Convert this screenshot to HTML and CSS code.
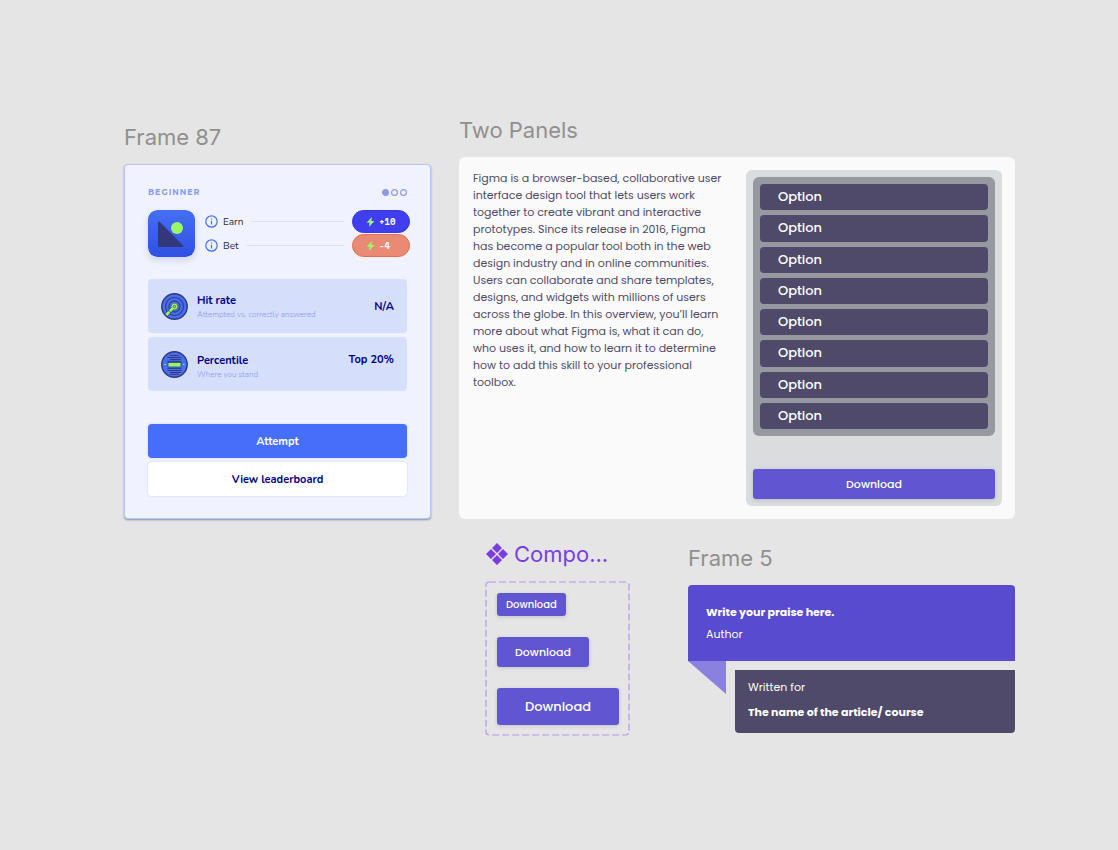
FILE: index.html
```
<!DOCTYPE html>
<html lang="en">
<head>
    <meta charset="UTF-8">
    <title>Components</title>
    <link rel="stylesheet" href="styles.css">
</head>

<body>
    <main class="canvas">

        <section class="frame">
            <h2 class="frame-title">Frame 87</h2>
            <div class="quiz-card">
                <div class="quiz-level">
                    <span>BEGINNER</span>
                    <svg class="dots" viewBox="0 0 25 7"><circle class="dot-on" cx="3.500" cy="3.500" r="2.900"/><circle cx="12.500" cy="3.500" r="2.900"/><circle cx="21.500" cy="3.500" r="2.900"/></svg>
                </div>

                <div class="quiz-stakes">
                    <svg class="quiz-logo" viewBox="0 0 47 47">
                        <defs>
                            <linearGradient id="logo-bg" x1="0" y1="0" x2="0" y2="1">
                                <stop offset="0" stop-color="#456ff5"/>
                                <stop offset="1" stop-color="#2f50e2"/>
                            </linearGradient>
                        </defs>
                        <rect width="47" height="47" rx="9" fill="url(#logo-bg)"/>
                        <path d="M10 13.200v22q0 1.800 1.800 1.800h22.600q1.800 0 .6-1.400L11.600 11.800q-1.600-1.200-1.600 1.400z" fill="#35377d"/>
                        <circle cx="29" cy="18" r="6" fill="#98f868"/>
                    </svg>
                    <div class="stakes">
                        <div class="stake">
                            <svg class="info" viewBox="0 0 13 13"><circle cx="6.500" cy="6.500" r="5.700"/><path d="M6.500 5.800v3.600M6.500 3.400v1.100"/></svg>
                            <span>Earn</span>
                            <span class="stake-line"></span>
                            <span class="pill pill-earn"><svg class="bolt" viewBox="0 0 9 10"><path d="M5.800 0 0.500 5.800h3L3 10l5.500-5.900h-3z"/></svg>+10</span>
                        </div>
                        <div class="stake">
                            <svg class="info" viewBox="0 0 13 13"><circle cx="6.500" cy="6.500" r="5.700"/><path d="M6.500 5.800v3.600M6.500 3.400v1.100"/></svg>
                            <span>Bet</span>
                            <span class="stake-line"></span>
                            <span class="pill pill-bet"><svg class="bolt" viewBox="0 0 9 10"><path d="M5.800 0 0.500 5.800h3L3 10l5.500-5.900h-3z"/></svg>-4</span>
                        </div>
                    </div>
                </div>

                <div class="stats">
                    <div class="stat">
                        <svg class="stat-icon" viewBox="0 0 27 27">
                            <g fill="#456ff5" stroke="#343a7c">
                                <circle cx="13.500" cy="13.500" r="12.700" stroke-width="1.500"/>
                                <circle cx="13.500" cy="13.500" r="9" stroke-width="1.100"/>
                                <circle cx="13.500" cy="13.500" r="5.600" stroke-width="1.100"/>
                            </g>
                            <circle cx="13.500" cy="13.500" r="3.400" fill="#98f868" stroke="#343a7c" stroke-width=".6"/>
                            <path d="M11.800 15.300 4.800 22.300" stroke="#343a7c" stroke-width="4"/>
                            <path d="M12 15.100 5 22.100" stroke="#98f868" stroke-width="2.800" stroke-dasharray="4.500 .6"/>
                            <circle cx="13.500" cy="13.500" r="1.200" fill="#98f868" stroke="#343a7c" stroke-width=".7"/>
                        </svg>
                        <div class="stat-text">
                            <strong>Hit rate</strong>
                            <small>Attempted vs. correctly answered</small>
                        </div>
                        <span class="stat-value">N/A</span>
                    </div>
                    <div class="stat stat-top">
                        <svg class="stat-icon" viewBox="0 0 27 27">
                            <circle cx="13.500" cy="13.500" r="12.700" fill="#456ff5" stroke="#343a7c" stroke-width="1.500"/>
                            <path d="M9 4.500h9M6.500 6.500h14M9 8.500h11M6.500 10.300h14M6.500 17.500h14M6.500 19.500h14M9 21.500h11M9 23.200h9" stroke="#343a7c"/>
                            <rect x="7" y="11.500" width="13" height="4.500" fill="#98f868" stroke="#343a7c" stroke-width=".8"/>
                            <path d="M3.500 13.500h1.500M22 13.500h1.500" stroke="#98f868"/>
                        </svg>
                        <div class="stat-text">
                            <strong>Percentile</strong>
                            <small>Where you stand</small>
                        </div>
                        <span class="stat-value">Top 20%</span>
                    </div>
                </div>

                <div class="quiz-actions">
                    <button class="quiz-btn quiz-btn-main" type="button">Attempt</button>
                    <button class="quiz-btn" type="button">View leaderboard</button>
                </div>
            </div>
        </section>

        <section class="frame">
            <h2 class="frame-title">Two Panels</h2>
            <div class="panels">
                <p class="panel-text">Figma is a browser-based, collaborative user interface design tool that lets users work together to create vibrant and interactive prototypes. Since its release in 2016, Figma has become a popular tool both in the web design industry and in online communities. Users can collaborate and share templates, designs, and widgets with millions of users across the globe. In this overview, you’ll learn more about what Figma is, what it can do, who uses it, and how to learn it to determine how to add this skill to your professional toolbox.</p>
                <div class="panel-side">
                    <div class="options">
                        <button class="option" type="button">Option</button>
                        <button class="option" type="button">Option</button>
                        <button class="option" type="button">Option</button>
                        <button class="option" type="button">Option</button>
                        <button class="option" type="button">Option</button>
                        <button class="option" type="button">Option</button>
                        <button class="option" type="button">Option</button>
                        <button class="option" type="button">Option</button>
                    </div>
                    <button class="btn btn-medium" type="button">Download</button>
                </div>
            </div>
        </section>

        <div class="lower">
            <section class="frame component">
                <h2 class="frame-title component-title">
                    <svg class="component-icon" viewBox="0 0 22 22"><path d="M11 0l5 5-5 5-5-5zM5 6l5 5-5 5-5-5zM17 6l5 5-5 5-5-5zM11 12l5 5-5 5-5-5z"/></svg>
                    <span>Compo...</span>
                </h2>
                <div class="variants">
                    <svg class="variants-outline"><rect x="1" y="1" rx="3"/></svg>
                    <button class="btn btn-small" type="button">Download</button>
                    <button class="btn btn-medium" type="button">Download</button>
                    <button class="btn btn-large" type="button">Download</button>
                </div>
            </section>

            <section class="frame praise">
                <h2 class="frame-title">Frame 5</h2>
                <div class="praise-quote">
                    <strong>Write your praise here.</strong>
                    <span>Author</span>
                </div>
                <div class="praise-lower">
                    <svg class="praise-tail" viewBox="0 0 38 33"><path d="M0 0h38v33z"/></svg>
                    <div class="praise-source">
                        <span>Written for</span>
                        <strong>The name of the article/ course</strong>
                    </div>
                </div>
            </section>
        </div>

    </main>
</body>
</html>
```
FILE: styles.css
```
* {
    box-sizing: border-box;
}
body {
    margin: 0;
    background-color: #e5e5e5;
    font-family: 'Poppins', 'Inter', sans-serif;
    font-size: 11px;
}
button {
    border: 0;
    padding: 0;
    font-family: inherit;
    cursor: pointer;
}
svg {
    display: block;
    flex: none;
}

/* canvas */
.canvas {
    display: grid;
    grid-template-columns: 307fr 556fr;
    align-items: end;
    column-gap: 28px;
    row-gap: 21px;
    padding: 116px 103px 60px 124px;
}
.frame-title {
    margin: 0 0 13px;
    color: #909090;
    font: 400 22px/28px 'Inter', sans-serif;
}

/* quiz card */
.quiz-card {
    padding: 20px 23px 22px;
    border: 1px solid #b3c8f8;
    border-radius: 4px;
    background-color: #f0f3ff;
    box-shadow: 0 1px 2px rgba(40, 60, 120, .5);
    font-family: 'Nunito', 'Open Sans', sans-serif;
}
.quiz-level {
    display: flex;
    align-items: center;
    justify-content: space-between;
    margin-bottom: 11px;
    color: #8a9bee;
    font: 700 8px/14px 'Montserrat', 'Inter', sans-serif;
    letter-spacing: 1px;
}
.dots {
    width: 25px;
    height: 7px;
    fill: none;
    stroke: #8a9bee;
    stroke-width: 1.2;
}
.dot-on {
    fill: #8a9bee;
}
.quiz-stakes {
    display: flex;
    gap: 10px;
    margin-right: -3px;
}
.quiz-logo {
    width: 47px;
    height: 47px;
    border-radius: 9px;
    box-shadow: 0 3px 7px rgba(60, 80, 160, .2);
}
.stakes {
    flex: 1;
    display: grid;
    gap: 1px;
}
.stake {
    display: flex;
    align-items: center;
    color: #1f2a4d;
    font-size: 10px;
}
.info {
    width: 13px;
    height: 13px;
    margin-right: 5px;
    fill: none;
    stroke: #456ff5;
    stroke-width: 1.2;
}
.stake-line {
    flex: 1;
    height: 1px;
    margin: 0 8px;
    background-color: #d3dffc;
}
.pill {
    display: flex;
    align-items: center;
    width: 58px;
    height: 23px;
    padding-left: 13px;
    border: 1px solid #3a37d8;
    border-radius: 12px;
    background-color: #403eee;
    color: #fff;
    font: 700 9px/12px 'Space Mono', 'Liberation Mono', monospace;
}
.pill-bet {
    border-color: #e0704f;
    background-color: #e98a75;
}
.bolt {
    width: 9px;
    height: 10px;
    margin-right: 4px;
    fill: #98f868;
}
.stats {
    display: grid;
    gap: 4px;
    margin: 22px 0 33px;
}
.stat {
    display: flex;
    align-items: center;
    height: 54px;
    padding: 0 13px;
    border-radius: 4px;
    background-color: #d5defb;
    color: #00008b;
}
.stat-icon {
    width: 27px;
    height: 27px;
    margin-right: 9px;
}
.stat-text {
    display: grid;
    flex: 1;
    padding-top: 2px;
}
.stat strong, .stat-value {
    font-size: 11px;
    font-weight: 700;
    line-height: 16px;
}
.stat small {
    color: #8a9bee;
    font-size: 8px;
    font-weight: 300;
    line-height: 12px;
}
.stat-value {
    padding-top: 2px;
}
.stat-top .stat-text {
    padding-top: 6px;
}
.stat-top .stat-value {
    align-self: flex-start;
    padding-top: 15px;
}
.quiz-actions {
    display: grid;
    gap: 4px;
}
.quiz-btn {
    height: 34px;
    border-radius: 4px;
    background-color: #fff;
    box-shadow: 0 0 2px rgba(60, 80, 160, .25);
    color: #00008b;
    font-size: 11px;
    font-weight: 700;
}
.quiz-btn-main {
    background-color: #456ff8;
    color: #fff;
}

/* two panels */
.panels {
    display: grid;
    grid-template-columns: 253fr 256fr;
    gap: 20px;
    padding: 13px 13px 13px 14px;
    border-radius: 6px;
    background-color: #fafafa;
}
.panel-text {
    margin: 0;
    color: #4f4a69;
    line-height: 17px;
}
.panel-side {
    display: flex;
    flex-direction: column;
    gap: 33px;
    padding: 7px;
    border-radius: 6px;
    background-color: #dbdcde;
}
.options {
    display: grid;
    gap: 5px;
    min-height: 259px;
    padding: 7px;
    border-radius: 6px;
    background-color: #9699a0;
}
.option {
    padding-left: 18px;
    border-radius: 4px;
    background-color: #4f4a69;
    color: #fff;
    font-size: 13px;
    font-weight: 500;
    text-align: left;
}

/* download button */
.btn {
    border-radius: 3px;
    background-color: #6056d2;
    box-shadow: 0 1px 4px rgba(0, 0, 0, .15);
    color: #fff;
    font-weight: 500;
}
.btn-small {
    height: 23px;
    padding: 0 9px;
    font-size: 10px;
}
.btn-medium {
    height: 30px;
    padding: 0 18px;
    font-size: 11px;
}
.btn-large {
    height: 37px;
    padding: 0 28px;
    font-size: 13px;
}

/* component and praise */
.lower {
    grid-column: 2;
    display: flex;
    align-items: center;
    justify-content: space-between;
    gap: 58px;
    padding-left: 26px;
}
.component {
    flex: none;
    width: 145px;
}
.component-title {
    display: flex;
    align-items: center;
    gap: 6px;
    padding-left: 1px;
    color: #7b3fe0;
}
.component-icon {
    width: 22px;
    height: 22px;
    fill: #7b3fe0;
}
.variants {
    position: relative;
    display: flex;
    flex-direction: column;
    align-items: flex-start;
    gap: 21px;
    padding: 12px 12px 11px;
}
.variants-outline {
    position: absolute;
    top: 0;
    left: 0;
    width: 100%;
    height: 100%;
    pointer-events: none;
}
.variants-outline rect {
    width: calc(100% - 2px);
    height: calc(100% - 2px);
    fill: none;
    stroke: #b596ea;
    stroke-width: 1.2;
    stroke-dasharray: 7 3;
}
.praise {
    flex: 1;
    color: #fff;
}
.praise strong {
    font-weight: 700;
}
.praise-quote {
    display: grid;
    align-content: center;
    gap: 6px;
    height: 76px;
    padding: 0 18px;
    border-radius: 4px 4px 0 0;
    background-color: #584bd0;
    line-height: 16px;
}
.praise-lower {
    display: flex;
    gap: 9px;
}
.praise-tail {
    width: 38px;
    height: 33px;
    fill: #8a81df;
}
.praise-source {
    flex: 1;
    display: grid;
    align-content: center;
    gap: 9px;
    height: 63px;
    margin-top: 9px;
    padding: 0 13px 4px;
    border-radius: 0 0 4px 4px;
    background-color: #4f4a69;
    line-height: 16px;
}
```
